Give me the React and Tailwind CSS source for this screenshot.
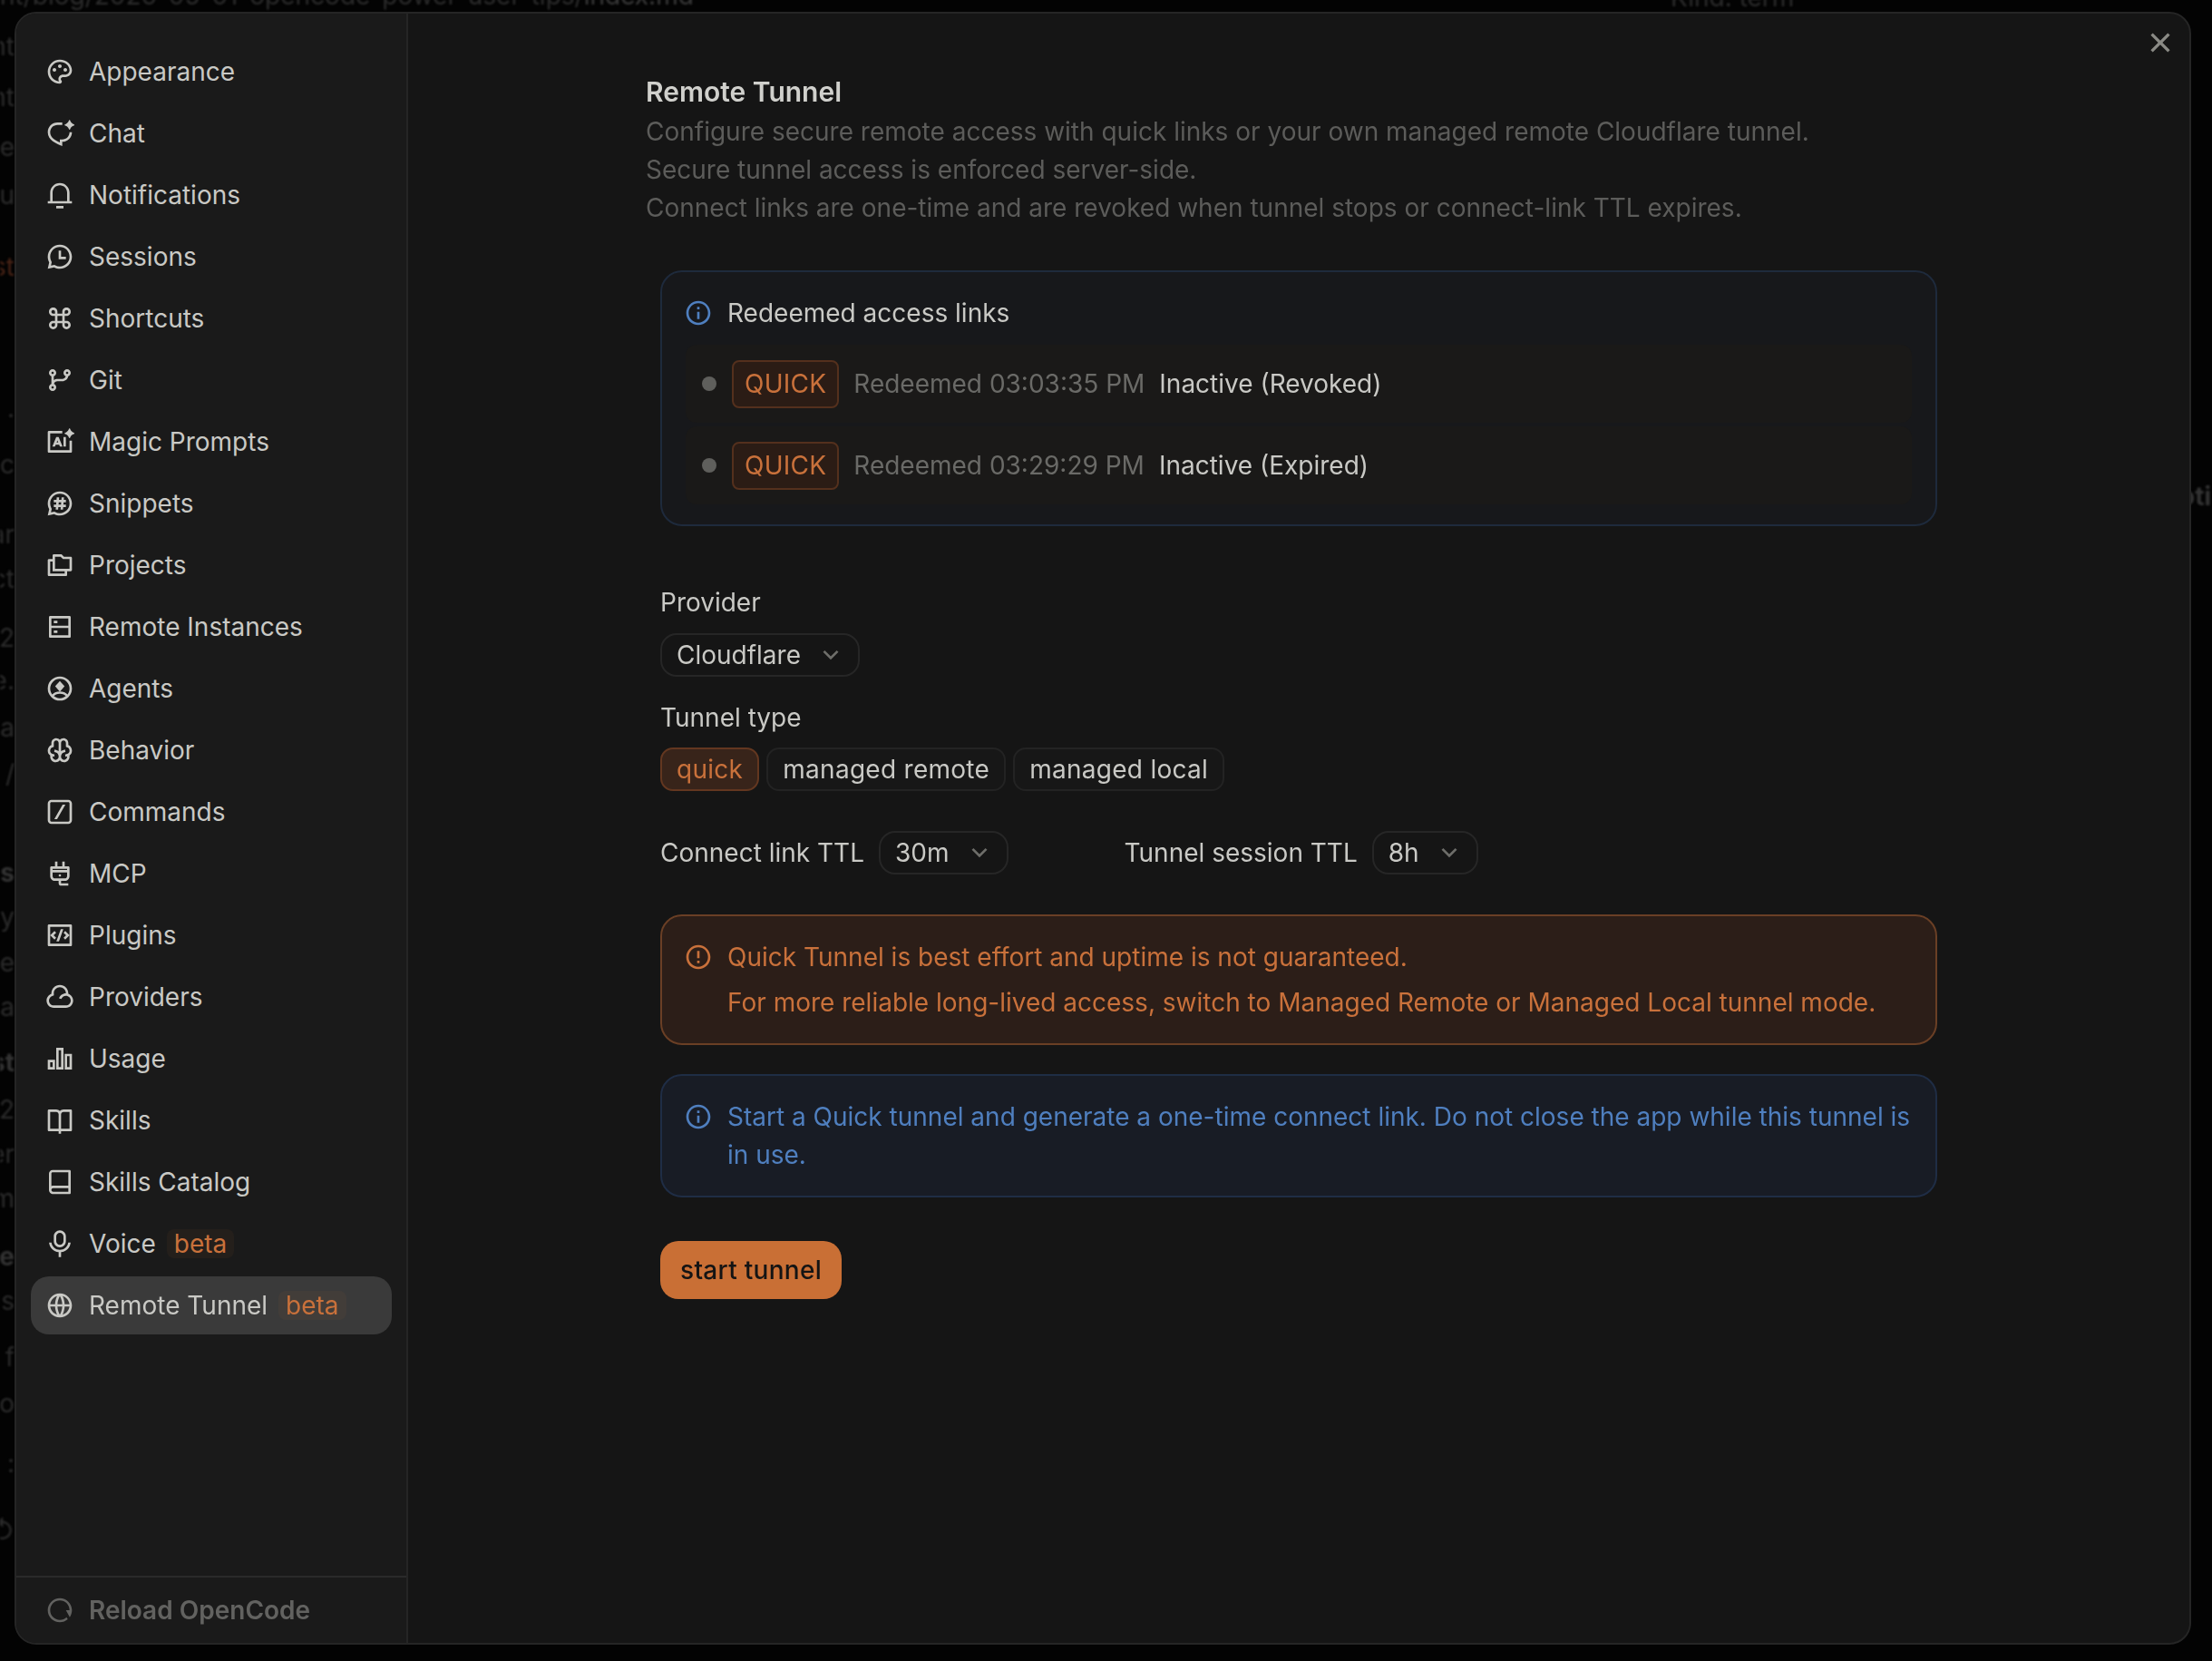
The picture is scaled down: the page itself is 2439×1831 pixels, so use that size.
import React from 'react';
import { RiPaletteLine, RiChatAiLine, RiNotification3Line, RiChatHistoryLine, RiCommandLine, RiGitBranchLine, RiAiGenerate2, RiChatThreadLine, RiFoldersLine, RiServerLine, RiBrainLine, RiSlashCommands2, RiPlugLine, RiCodeBoxLine, RiCloudLine, RiBarChart2Line, RiBookOpenLine, RiBookLine, RiMicLine, RiGlobalLine, RiRestartLine, RiCloseLine, RiInformationLine, RiErrorWarningLine, RiArrowDownSLine } from 'react-icons/ri';

const AgentIcon = ({ className }) => (
  <svg viewBox="0 0 24 24" className={className} fill="none" stroke="currentColor" strokeWidth="2">
    <circle cx="12" cy="12" r="9" />
    <path d="M12 5.8l3.9 4.4L12 14.6l-3.9-4.4z" fill="currentColor" stroke="none" />
    <path d="M5.6 18.3C7.4 16.2 9.5 15.4 12 15.4s4.6.8 6.4 2.9" />
  </svg>
);

const nav = [
  ['Appearance', RiPaletteLine], ['Chat', RiChatAiLine], ['Notifications', RiNotification3Line],
  ['Sessions', RiChatHistoryLine], ['Shortcuts', RiCommandLine], ['Git', RiGitBranchLine],
  ['Magic Prompts', RiAiGenerate2], ['Snippets', RiChatThreadLine], ['Projects', RiFoldersLine],
  ['Remote Instances', RiServerLine], ['Agents', AgentIcon], ['Behavior', RiBrainLine],
  ['Commands', RiSlashCommands2], ['MCP', RiPlugLine], ['Plugins', RiCodeBoxLine],
  ['Providers', RiCloudLine], ['Usage', RiBarChart2Line], ['Skills', RiBookOpenLine],
  ['Skills Catalog', RiBookLine], ['Voice', RiMicLine, true], ['Remote Tunnel', RiGlobalLine, true, true],
];

const ghostLeft = [
  ['nt', 51], ['nt', 107], ['e', 162], ['3u', 215], ['st', 294, 'o'], ['.', 450], ['lc', 512], ['ar', 589],
  ['ct', 638], ['42', 703], ['e.', 750], ['.a', 802], ['/', 853], ['s', 962, 'b'], ['ly', 1011], ['re', 1061],
  ['la', 1110], ['st', 1171, 'b'], ['.2', 1223], ['er', 1272], ['m', 1321], ['e', 1385, 'b'], ['es', 1434],
  ['f', 1496], ['co', 1547], [':', 1613], ['↺', 1687],
];

const Select = ({ label }) => (
  <div className="flex h-12 items-center gap-[17px] rounded-[18px] border-2 border-[#262626] bg-[#151515] pl-4 pr-[14px] text-[#c9c9c5]">
    <span>{label}</span>
    <RiArrowDownSLine className="h-8 w-8 text-[#6e6e6a]" />
  </div>
);

const Row = ({ time, status }) => (
  <div className="flex h-[86px] items-center rounded-xl bg-[#1a1918] pl-[18px]">
    <span className="h-4 w-4 rounded-full bg-[#5f5f5c]" />
    <span className="ml-[17px] flex h-[53px] items-center rounded-[8px] border-2 border-[#54301d] bg-[#2b1c15] px-[12px] tracking-[0.25px] text-[#c9713b]">QUICK</span>
    <span className="ml-4 text-[#6a6a67]">Redeemed {time}</span>
    <span className="ml-4 text-[#c9c9c5]">{status}</span>
  </div>
);

export default function App() {
  return (
    <div className="relative h-[1831px] w-[2439px] overflow-hidden bg-[#030303] pl-4 pt-[13px] font-['Inter','Noto_Sans',sans-serif] text-[28px] leading-[42px]">
      <div className="absolute inset-0 text-[#2c2c2c] blur-[1px]">
        {ghostLeft.map(([t, y, k], i) => (
          <div key={i} className={'absolute left-0 flex w-4 -translate-y-1/2 justify-end overflow-hidden whitespace-nowrap' + (k === 'o' ? ' text-[#4a2416]' : '') + (k === 'b' ? ' font-bold text-[#333]' : '')} style={{ top: y }}>{t}</div>
        ))}
        <div className="absolute -top-[26px] left-0 whitespace-nowrap">nt/blog/2026-05-01-opencode-power-user-tips/<span className="text-[#3a3a3a]">index.md</span></div>
        <div className="absolute -top-[24px] left-[1842px] whitespace-nowrap">Kind: term</div>
        <div className="absolute left-[2403px] top-[526px] whitespace-nowrap font-bold text-[#333]">oti</div>
      </div>

      <div className="relative flex h-[1800px] w-[2400px] overflow-hidden rounded-[24px] border-2 border-[#252525] bg-[#151515]">
        <aside className="flex w-[432px] shrink-0 flex-col border-r-2 border-[#252525] bg-[#1a1a1a]">
          <nav className="flex flex-1 flex-col gap-1 pl-4 pr-4 pt-[32px]">
            {nav.map(([t, Icon, beta, active]) => (
              <div key={t} className={'flex h-16 items-center rounded-[20px] pl-4 text-[#c9c9c5]' + (active ? ' bg-[#3a3a3a]' : '')}>
                <Icon className="h-8 w-8 shrink-0" />
                <span className="ml-4">{t}</span>
                {beta && <span className="ml-3 flex h-8 items-center rounded-lg bg-[#c9713b]/[0.06] px-2 text-[#c9713b]">beta</span>}
              </div>
            ))}
          </nav>
          <div className="flex h-[74px] items-center gap-4 border-t-2 border-[#2a2a2a] pl-8 font-semibold text-[#626260]">
            <RiRestartLine className="h-8 w-8" />
            <span>Reload OpenCode</span>
          </div>
        </aside>

        <main className="relative flex flex-1 justify-center pt-[64px]">
          <button className="absolute right-3 top-3 text-[#8a8a85]"><RiCloseLine className="h-10 w-10" /></button>
          <div className="flex w-[1440px] flex-col">
            <h1 className="text-[30px] font-semibold leading-[44px] text-[#d0d0cc]">Remote Tunnel</h1>
            <p className="mt-[1px] text-[#5c5c5a]">Configure secure remote access with quick links or your own managed remote Cloudflare tunnel.</p>
            <p className="text-[#5c5c5a]">Secure tunnel access is enforced server-side.</p>
            <p className="text-[#5c5c5a]">Connect links are one-time and are revoked when tunnel stops or connect-link TTL expires.</p>

            <div className="mx-4 mt-12 flex flex-col">
              <div className="rounded-[24px] border-2 border-[#1e2a3c] bg-[#17181b] px-[26px] pb-[22px] pt-6">
                <div className="mb-[14px] flex items-center gap-[14px] text-[#c9c9c5]">
                  <RiInformationLine className="h-8 w-8 -translate-x-[2px] text-[#4f7fbf]" />
                  <span>Redeemed access links</span>
                </div>
                <div className="flex flex-col gap-1">
                  <Row time="03:03:35 PM" status="Inactive (Revoked)" />
                  <Row time="03:29:29 PM" status="Inactive (Expired)" />
                </div>
              </div>

              <div className="mt-[63px] text-[#c9c9c5]">Provider</div>
              <div className="mt-[13px] flex"><Select label="Cloudflare" /></div>
              <div className="mt-6 text-[#c9c9c5]">Tunnel type</div>
              <div className="mt-3 flex gap-2 text-[#c9c9c5] tracking-[0.28px]">
                <span className="flex h-12 items-center rounded-[14px] border-2 border-[#633720] bg-[#38241a] px-4 text-[#c9713b]">quick</span>
                <span className="flex h-12 items-center rounded-[14px] border-2 border-[#232323] bg-[#171717] px-4">managed remote</span>
                <span className="flex h-12 items-center rounded-[14px] border-2 border-[#232323] bg-[#171717] px-4">managed local</span>
              </div>
              <div className="mt-[44px] flex items-center text-[#c9c9c5]">
                <span className="mr-4">Connect link TTL</span>
                <Select label="30m" />
                <span className="ml-[128px] mr-4">Tunnel session TTL</span>
                <Select label="8h" />
              </div>

              <div className="mt-[44px] flex gap-[16px] rounded-[24px] border-2 border-[#6a3f25] bg-[#2c1e18] px-[24px] py-6 text-[#c9713b]">
                <RiErrorWarningLine className="mt-[5px] h-8 w-8 shrink-0" />
                <div className="flex flex-col gap-2">
                  <p>Quick Tunnel is best effort and uptime is not guaranteed.</p>
                  <p>For more reliable long-lived access, switch to Managed Remote or Managed Local tunnel mode.</p>
                </div>
              </div>

              <div className="mt-8 flex gap-[16px] rounded-[24px] border-2 border-[#1f2d45] bg-[#181c25] px-[24px] py-6 text-[#4f7fbf]">
                <RiInformationLine className="mt-[5px] h-8 w-8 shrink-0" />
                <p>Start a Quick tunnel and generate a one-time connect link. Do not close the app while this tunnel is in use.</p>
              </div>

              <div className="mt-12 flex">
                <button className="h-16 rounded-[20px] bg-[#c96f35] px-[22px] font-medium tracking-[0.3px] text-[#141414]">start tunnel</button>
              </div>
            </div>
          </div>
        </main>
      </div>
    </div>
  );
}
